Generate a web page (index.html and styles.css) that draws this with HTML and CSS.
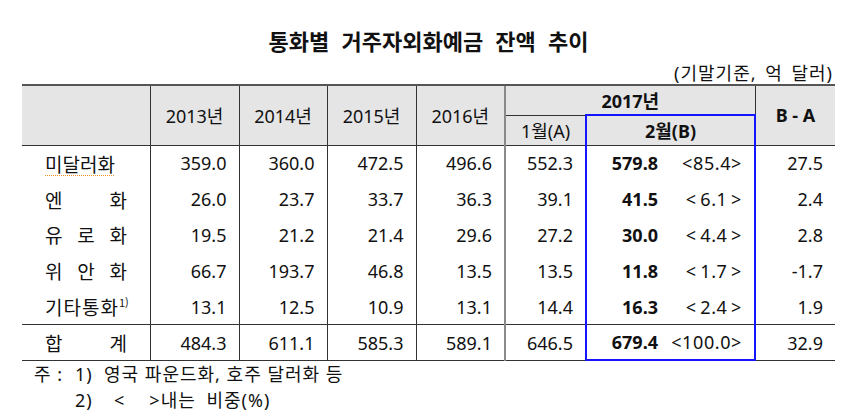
FILE: index.html
```html
<!DOCTYPE html>
<html lang="ko">
<head>
<meta charset="utf-8">
<link rel="stylesheet" href="styles.css">
</head>
<body>
<div class="page">
  <h1 class="title">통화별 거주자외화예금 잔액 추이</h1>
  <div class="unit">(기말기준, 억 달러)</div>
  <table class="tbl">
    <colgroup>
      <col class="c-label"><col class="c-y"><col class="c-y2"><col class="c-y"><col class="c-y">
      <col class="c-m1"><col class="c-m2"><col class="c-d">
    </colgroup>
    <thead>
      <tr class="h1">
        <th rowspan="2"></th>
        <th rowspan="2">2013년</th>
        <th rowspan="2">2014년</th>
        <th rowspan="2">2015년</th>
        <th rowspan="2" class="sep">2016년</th>
        <th colspan="2" class="bold">2017년</th>
        <th rowspan="2" class="bold">B - A</th>
      </tr>
      <tr class="h2">
        <th>1월(A)</th>
        <th class="hl bold">2월(B)</th>
      </tr>
    </thead>
    <tbody>
      <tr>
        <td class="lbl"><span class="just squiggle">미달러화</span></td>
        <td>359.0</td><td>360.0</td><td>472.5</td><td class="sep">496.6</td><td>552.3</td>
        <td class="hl"><div class="pair"><b>579.8</b><span>&lt;85.4&gt;</span></div></td>
        <td>27.5</td>
      </tr>
      <tr>
        <td class="lbl"><span class="just"><span>엔</span><span>화</span></span></td>
        <td>26.0</td><td>23.7</td><td>33.7</td><td class="sep">36.3</td><td>39.1</td>
        <td class="hl"><div class="pair"><b>41.5</b><span>&lt;&thinsp;6.1&thinsp;&gt;</span></div></td>
        <td>2.4</td>
      </tr>
      <tr>
        <td class="lbl"><span class="just"><span>유</span><span>로</span><span>화</span></span></td>
        <td>19.5</td><td>21.2</td><td>21.4</td><td class="sep">29.6</td><td>27.2</td>
        <td class="hl"><div class="pair"><b>30.0</b><span>&lt;&thinsp;4.4&thinsp;&gt;</span></div></td>
        <td>2.8</td>
      </tr>
      <tr>
        <td class="lbl"><span class="just"><span>위</span><span>안</span><span>화</span></span></td>
        <td>66.7</td><td>193.7</td><td>46.8</td><td class="sep">13.5</td><td>13.5</td>
        <td class="hl"><div class="pair"><b>11.8</b><span>&lt;&thinsp;1.7&thinsp;&gt;</span></div></td>
        <td>-1.7</td>
      </tr>
      <tr>
        <td class="lbl"><span class="plain">기타통화<sup>1)</sup></span></td>
        <td>13.1</td><td>12.5</td><td>10.9</td><td class="sep">13.1</td><td>14.4</td>
        <td class="hl"><div class="pair"><b>16.3</b><span>&lt;&thinsp;2.4&thinsp;&gt;</span></div></td>
        <td>1.9</td>
      </tr>
      <tr class="sum">
        <td class="lbl"><span class="just"><span>합</span><span>계</span></span></td>
        <td>484.3</td><td>611.1</td><td>585.3</td><td class="sep">589.1</td><td>646.5</td>
        <td class="hl last"><div class="pair"><b>679.4</b><span>&lt;100.0&gt;</span></div></td>
        <td>32.9</td>
      </tr>
    </tbody>
  </table>
  <div class="notes">
    <div class="note"><span class="lead">주 : </span><span>1)&nbsp; 영국 파운드화, 호주 달러화 등</span></div>
    <div class="note"><span class="lead"></span><span class="wide">2)&nbsp; &lt;<span class="gap"></span>&gt;내는 비중(%)</span></div>
  </div>
</div>
</body>
</html>
```

FILE: styles.css
```css
html, body {
  margin: 0;
  padding: 0;
  background: #ffffff;
}

body {
  font-family: "Noto Sans", "Noto Sans CJK KR", sans-serif;
  color: #111111;
}

.page {
  width: 860px;
  height: 420px;
  padding: 25px 25px 0 22px;
  box-sizing: border-box;
}

.title {
  margin: 0;
  text-align: center;
  font-family: "Noto Sans CJK KR", sans-serif;
  font-size: 22px;
  font-weight: 700;
  line-height: 30px;
  word-spacing: 6px;
}

.unit {
  margin-top: 7px;
  text-align: right;
  font-size: 18px;
  line-height: 22px;
  padding-right: 2px;
  letter-spacing: 1px;
  word-spacing: 3px;
}

.tbl {
  width: 813px;
  border-collapse: collapse;
  table-layout: fixed;
  font-size: 18px;
}

.c-label { width: 128px; }
.c-y { width: 89px; }
.c-y2 { width: 88px; }
.c-m1 { width: 81px; }
.c-m2 { width: 169px; }
.c-d { width: 80px; }

.tbl th {
  background: #e5e5e5;
  font-weight: 400;
  text-align: center;
  padding: 0;
  border-left: 1px solid #333333;
  border-bottom: 1px solid #333333;
}

.tbl thead tr.h1 th {
  border-top: 2px solid #555555;
}

.tbl thead tr.h1 th:first-child {
  border-left: none;
}

.tbl tr.h1 { height: 30px; }
.tbl tr.h2 { height: 30px; }

.tbl .bold { font-weight: 700; }

.tbl td {
  padding: 0 12px 0 0;
  text-align: right;
  border-left: 1px solid #333333;
  height: 35.8px;
  white-space: nowrap;
}

.tbl td.lbl {
  border-left: none;
  padding: 0 0 0 23px;
  text-align: left;
}

.tbl .sep + td,
.tbl .sep + th {
  border-left: 2px solid #8a8a8a;
}

.tbl tr.h2 th:first-child {
  border-left: 2px solid #8a8a8a;
}

.tbl .hl {
  border-left: 2px solid #1515ff;
  border-right: 2px solid #1515ff;
}

.tbl th.hl {
  border-top: 2px solid #1515ff;
}

.tbl td.hl {
  padding: 0;
}

.tbl td.hl.last {
  border-bottom: 2px solid #1515ff;
}

.tbl tr.sum td {
  border-top: 1px solid #333333;
  border-bottom: 1px solid #333333;
  height: 34px;
}

.pair {
  display: grid;
  grid-template-columns: 71px 1fr;
  padding-right: 12px;
}

.pair b {
  font-weight: 700;
  text-align: right;
}

.pair span {
  text-align: right;
  letter-spacing: 0.6px;
}

.just {
  display: inline-flex;
  justify-content: space-between;
  width: 82px;
  font-family: "Noto Sans CJK KR", sans-serif;
  font-size: 19px;
}

.plain {
  font-family: "Noto Sans CJK KR", sans-serif;
  font-size: 19px;
  letter-spacing: 1px;
}

.plain sup {
  font-size: 11px;
  letter-spacing: 0;
  vertical-align: 8px;
  line-height: 0;
}

.squiggle {
  text-decoration: underline dotted #f09020;
  text-decoration-thickness: 1px;
  text-underline-offset: 3px;
}

.notes {
  padding-left: 12px;
  margin-top: 0;
}

.note {
  display: flex;
  font-size: 18px;
  line-height: 26px;
  letter-spacing: 1px;
  font-family: "Noto Sans", "Noto Sans CJK KR", sans-serif;
}

.note .lead {
  width: 41px;
  white-space: pre;
}

.note .wide {
  word-spacing: 5px;
}

.note .gap {
  display: inline-block;
  width: 24px;
}
```
